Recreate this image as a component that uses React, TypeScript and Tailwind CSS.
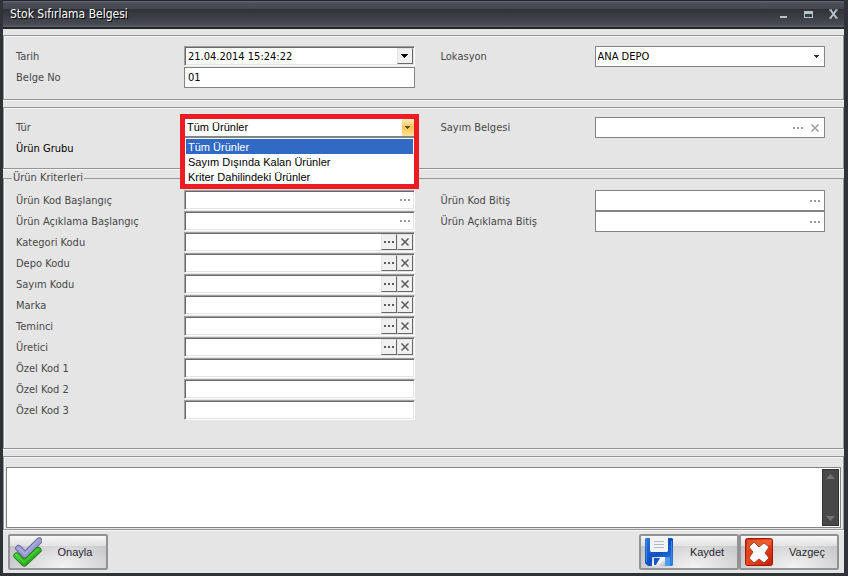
import { useState } from "react";
import type { ReactNode } from "react";
import clsx from "clsx";

const kinds = ["Tüm Ürünler", "Sayım Dışında Kalan Ürünler", "Kriter Dahilindeki Ürünler"];

const criteria = [
  { id: "kategori", label: "Kategori Kodu", lookup: true },
  { id: "depo", label: "Depo Kodu", lookup: true },
  { id: "sayim", label: "Sayım Kodu", lookup: true },
  { id: "marka", label: "Marka", lookup: true },
  { id: "teminci", label: "Teminci", lookup: true },
  { id: "uretici", label: "Üretici", lookup: true },
  { id: "ozel1", label: "Özel Kod 1", lookup: false },
  { id: "ozel2", label: "Özel Kod 2", lookup: false },
  { id: "ozel3", label: "Özel Kod 3", lookup: false },
];

const formGrid = "grid grid-cols-[168px_1fr_180px_1fr] pl-3 pr-[18px]";
const sunken =
  "flex h-5 border border-t-[#a0a0a0] border-l-[#a0a0a0] border-r-white border-b-white bg-white shadow-[inset_1px_1px_0_#696969,inset_-1px_-1px_0_#e3e3e3]";
const flat = "flex h-[21px] border border-[#848484] bg-white";
const textInput = "min-w-0 flex-1 bg-transparent pt-[2px] pl-[3px] outline-none";

function Dots() {
  return (
    <svg width="10" height="2" viewBox="0 0 10 2" fill="currentColor" shapeRendering="crispEdges">
      <path d="M0 0h2v2H0zM4 0h2v2H4zM8 0h2v2H8z" />
    </svg>
  );
}

function Cross() {
  return (
    <svg width="8" height="8" viewBox="0 0 8 8" stroke="currentColor" strokeWidth="1.5">
      <path d="M.5.5l7 7M7.5.5l-7 7" />
    </svg>
  );
}

function Arrow() {
  return (
    <svg width="5" height="3" viewBox="0 0 5 3" fill="currentColor" shapeRendering="crispEdges">
      <path d="M0 0h5v1H4v1H3v1H2V2H1V1H0z" />
    </svg>
  );
}

function Panel({ children, className }: { children: ReactNode; className?: string }) {
  return (
    <section
      className={clsx("border border-[#969696] shadow-[inset_1px_1px_0_#f6f6f6,0_1px_0_#f6f6f6]", className)}
    >
      {children}
    </section>
  );
}

function Label({ id, children, className }: { id: string; children: ReactNode; className?: string }) {
  return (
    <label htmlFor={id} className={clsx("h-5 leading-[22px] whitespace-nowrap text-[#484848]", className)}>
      {children}
    </label>
  );
}

function LookupButton({ name, children }: { name: string; children: ReactNode }) {
  return (
    <button
      type="button"
      aria-label={name}
      className="flex w-4 items-center justify-center border border-t-[#e3e3e3] border-l-[#e3e3e3] border-r-[#696969] border-b-[#696969] bg-[#f0f0f0] text-[#5a5a5a]"
    >
      {children}
    </button>
  );
}

function CheckIcon() {
  return (
    <svg width="30" height="31" viewBox="0 0 32 33" fill="none" strokeLinecap="round" strokeLinejoin="round">
      <defs>
        <linearGradient id="green" x1="0" y1="0" x2="1" y2="1">
          <stop offset="0" stopColor="#46dc46" />
          <stop offset="1" stopColor="#249a10" />
        </linearGradient>
      </defs>
      <path d="M7 12l7 7L29 4" stroke="#55558e" strokeWidth="7" />
      <path d="M7 12l7 7L29 4" stroke="#9c9cd4" strokeWidth="5.500" />
      <path d="M6 11l8 7L28 3" stroke="#b8b8e6" strokeWidth="1" />
      <path d="M5 20l8 8 15-14" stroke="#17700c" strokeWidth="7" />
      <path d="M5 20l8 8 15-14" stroke="url(#green)" strokeWidth="5.500" />
      <path d="M4 19l9 8 14-14" stroke="#62d850" strokeWidth="1" />
    </svg>
  );
}

function SaveIcon() {
  return (
    <svg width="28" height="28" viewBox="0 0 28 28">
      <defs>
        <linearGradient id="disk" x1="0" y1="0" x2="1" y2="1">
          <stop offset="0" stopColor="#2c7ae0" />
          <stop offset=".5" stopColor="#0d4fc0" />
          <stop offset="1" stopColor="#2f86e0" />
        </linearGradient>
        <linearGradient id="shutter" x1="0" y1="0" x2="1" y2="1">
          <stop offset="0" stopColor="#b9c3cc" />
          <stop offset=".5" stopColor="#fff" />
          <stop offset="1" stopColor="#aab4be" />
        </linearGradient>
      </defs>
      <path d="M1 0h26l1 1v26l-1 1H3l-3-3V1z" fill="url(#disk)" />
      <path d="M1 1h1v23H1zM26 3h1v22h-1z" fill="#3f86e4" />
      <path d="M5 0h18v13l-1 1H6l-1-1z" fill="#f3f4f6" />
      <path d="M9 3h10v1H9zM9 6h10v1H9zM9 9h10v1H9z" fill="#b4b9c0" />
      <path d="M7 19h13v9H7z" fill="url(#shutter)" />
      <path d="M9 20h6l-4 7H9z" fill="#1757c4" />
      <path d="M20 19h5v9h-5z" fill="#4f9bec" />
    </svg>
  );
}

function CancelIcon() {
  return (
    <svg width="28" height="28" viewBox="0 0 28 28">
      <defs>
        <linearGradient id="red" x1="0" y1="0" x2="1" y2="1">
          <stop offset="0" stopColor="#c22a14" />
          <stop offset=".45" stopColor="#ee4a1c" />
          <stop offset="1" stopColor="#c01c08" />
        </linearGradient>
      </defs>
      <rect x=".5" y=".5" width="27" height="27" rx="2" fill="url(#red)" stroke="#a51508" />
      <path d="M2 2h24v5C18 10 9 12 2 12z" fill="#ff8a4a" opacity=".35" />
      <path
        d="M9 4l5 5 5-4 5 4-4 6 4 5-5 5-5-4-5 4-5-5 4-6-4-5z"
        fill="#fff"
        stroke="#8e1a0c"
        strokeWidth=".7"
        strokeLinejoin="round"
      />
    </svg>
  );
}

function ActionButton({ icon, children, className }: { icon: ReactNode; children: ReactNode; className?: string }) {
  return (
    <button
      type="button"
      className={clsx(
        "flex h-9 w-[100px] items-center rounded-[2px] border-2 border-[#929294] bg-[radial-gradient(ellipse_at_55%_100%,#f4f4f5_0%,transparent_75%),linear-gradient(#f8f8f8_0%,#dedede_30%,#c6c6c8_31%,#cbcbcd_100%)] font-['Liberation_Sans',sans-serif] text-[#26262e]",
        className,
      )}
    >
      <span className="flex w-8 shrink-0">{icon}</span>
      <span className="flex-1 text-center">{children}</span>
    </button>
  );
}

export default function App() {
  const [kind, setKind] = useState(kinds[0]);

  return (
    <main className="flex min-h-screen flex-col border-r-4 border-b-[3px] border-l-[3px] border-[#2f3238] bg-[#e5e5e5] font-['DejaVu_Sans_Condensed','Noto_Sans',sans-serif] text-[11px] text-black">
      <header className="flex h-[29px] items-center border-t border-b-2 border-t-[#25262d] border-b-[#25262d] bg-[linear-gradient(#686b75_0%,#4c4e5a_8%,#444650_30%,#303236_32%,#484a52_90%,#62656d_100%)] pr-[5px] pl-[7px] text-[#b5c3cc]">
        <h1 className="flex-1 text-xs text-white [text-shadow:1px_1px_0_#000]">Stok Sıfırlama Belgesi</h1>
        <div className="flex gap-[15px]">
          <button type="button" aria-label="Simge durumuna küçült">
            <svg width="10" height="10" viewBox="0 0 10 10" fill="currentColor" shapeRendering="crispEdges">
              <path d="M1 7h7v2H1z" />
            </svg>
          </button>
          <button type="button" aria-label="Ekranı kapla">
            <svg width="10" height="10" viewBox="0 0 10 10" fill="currentColor" shapeRendering="crispEdges">
              <path d="M0 2h9v7H0zM1 5v3h7V5z" fillRule="evenodd" />
            </svg>
          </button>
          <button type="button" aria-label="Kapat">
            <svg width="10" height="10" viewBox="0 0 10 10" stroke="currentColor" strokeWidth="2">
              <path d="M1.500 1l6 8M7.500 1l-6 8" />
              <path d="M0 1h3M6 1h3M0 9h3M6 9h3" strokeWidth="1" />
            </svg>
          </button>
        </div>
      </header>

      <Panel className="mt-[6px] h-[65px] pt-[10px]">
        <div className={formGrid}>
          <Label id="tarih">Tarih</Label>
          <div className={clsx(sunken, "mb-px")}>
            <input id="tarih" defaultValue="21.04.2014 15:24:22" className={textInput} />
            <button
              type="button"
              aria-label="Takvimi aç"
              className="m-px flex w-4 items-center justify-center border border-t-[#e3e3e3] border-l-[#e3e3e3] border-r-[#696969] border-b-[#696969] bg-[#f0f0f0]"
            >
              <svg width="7" height="4" viewBox="0 0 7 4" shapeRendering="crispEdges">
                <path d="M0 0h7v1H6v1H5v1H4v1H3V3H2V2H1V1H0z" />
              </svg>
            </button>
          </div>
          <Label id="lokasyon" className="pl-[26px]">Lokasyon</Label>
          <div className={clsx(flat, "relative items-center")}>
            <select id="lokasyon" className="h-full w-full appearance-none pt-[2px] pl-[2px] outline-none">
              <option>ANA DEPO</option>
            </select>
            <span className="pointer-events-none absolute right-[5px] text-[#333]">
              <Arrow />
            </span>
          </div>
          <Label id="belge">Belge No</Label>
          <div className={flat}>
            <input id="belge" defaultValue="01" className={textInput} />
          </div>
        </div>
      </Panel>

      <Panel className="mt-[7px] h-[62px] pt-[9px]">
        <div className={formGrid}>
          <Label id="tur">Tür</Label>
          <div className="relative">
            <div className="absolute -top-[3px] -right-1 -left-1 z-10 border-[5px] border-[#ed1c24] bg-white font-['Liberation_Sans',sans-serif]">
              <div className="relative flex h-[17px]">
                <select
                  id="tur"
                  value={kind}
                  onChange={(e) => setKind(e.target.value)}
                  className="w-full appearance-none pl-[2px] outline-none"
                >
                  {kinds.map((k) => (
                    <option key={k}>{k}</option>
                  ))}
                </select>
                <span className="pointer-events-none absolute inset-y-0 right-0 flex w-3 items-center justify-center bg-linear-to-b from-[#fdf0b8] via-[#f8c64c] to-[#fde39a] text-[#5c4a20]">
                  <Arrow />
                </span>
              </div>
              <ul role="listbox" aria-label="Tür" className="border-t-2 border-[#848484] pt-px">
                {kinds.map((k) => (
                  <li
                    key={k}
                    role="option"
                    aria-selected={k === kind}
                    onClick={() => setKind(k)}
                    className={clsx("mx-px h-[15px] pl-[2px] leading-4", k === kind && "bg-[#316ac5] text-white")}
                  >
                    {k}
                  </li>
                ))}
              </ul>
            </div>
          </div>
          <Label id="sayim-belgesi" className="pl-[26px]">Sayım Belgesi</Label>
          <div className={clsx(flat, "items-center gap-2 pr-[5px] text-[#9b9b9b]")}>
            <input id="sayim-belgesi" className={textInput} />
            <button type="button" aria-label="Belge seç"><Dots /></button>
            <button type="button" aria-label="Temizle"><Cross /></button>
          </div>
          <span className="h-5 leading-[22px]">Ürün Grubu</span>
        </div>
      </Panel>

      <fieldset className="mt-px flex-1 border border-[#969696] pb-6 shadow-[inset_1px_0_0_#f6f6f6,0_1px_0_#f6f6f6]">
        <legend className="ml-2 h-4 px-px leading-4 text-[#484848]">Ürün Kriterleri</legend>
        <div className={clsx(formGrid, "pt-1")}>
          <Label id="kod-bas">Ürün Kod Başlangıç</Label>
          <div className={clsx(sunken, "mb-px items-center pr-1 text-[#9b9b9b]")}>
            <input id="kod-bas" className={textInput} />
            <button type="button" aria-label="Ürün seç"><Dots /></button>
          </div>
          <Label id="kod-bit" className="pl-[26px]">Ürün Kod Bitiş</Label>
          <div className={clsx(flat, "items-center pr-1 text-[#9b9b9b]")}>
            <input id="kod-bit" className={textInput} />
            <button type="button" aria-label="Ürün seç"><Dots /></button>
          </div>
          <Label id="ack-bas">Ürün Açıklama Başlangıç</Label>
          <div className={clsx(sunken, "mb-px items-center pr-1 text-[#9b9b9b]")}>
            <input id="ack-bas" className={textInput} />
            <button type="button" aria-label="Ürün seç"><Dots /></button>
          </div>
          <Label id="ack-bit" className="pl-[26px]">Ürün Açıklama Bitiş</Label>
          <div className={clsx(flat, "items-center pr-1 text-[#9b9b9b]")}>
            <input id="ack-bit" className={textInput} />
            <button type="button" aria-label="Ürün seç"><Dots /></button>
          </div>
          {criteria.map((c) => (
            <div key={c.id} className="col-span-4 grid grid-cols-subgrid">
              <Label id={c.id}>{c.label}</Label>
              <div className={clsx(sunken, "mb-px py-px pr-px")}>
                <input id={c.id} className={textInput} />
                {c.lookup && (
                  <>
                    <LookupButton name={c.label + " seç"}><Dots /></LookupButton>
                    <LookupButton name={c.label + " temizle"}><Cross /></LookupButton>
                  </>
                )}
              </div>
            </div>
          ))}
        </div>
      </fieldset>

      <Panel className="mt-[7px] px-[2px] pt-[10px] pb-px">
        <div className="flex h-[61px] border border-[#848484] bg-white p-px">
          <textarea aria-label="Açıklama" className="min-w-0 flex-1 resize-none outline-none" />
          <div className="flex w-[17px] flex-col items-center justify-between border border-[#333] bg-[#484848] py-1 text-[#747474]">
            <svg width="9" height="5" viewBox="0 0 9 5" fill="currentColor"><path d="M0 5l4.500-5L9 5z" /></svg>
            <svg width="9" height="5" viewBox="0 0 9 5" fill="currentColor"><path d="M0 0l4.500 5L9 0z" /></svg>
          </div>
        </div>
      </Panel>

      <footer className="flex pt-1 pr-[5px] pb-[3px] pl-[5px]">
        <ActionButton icon={<CheckIcon />} className="pl-[2px]">Onayla</ActionButton>
        <div className="flex-1" />
        <ActionButton icon={<SaveIcon />} className="pl-1">Kaydet</ActionButton>
        <ActionButton icon={<CancelIcon />} className="pl-1">Vazgeç</ActionButton>
      </footer>
    </main>
  );
}
